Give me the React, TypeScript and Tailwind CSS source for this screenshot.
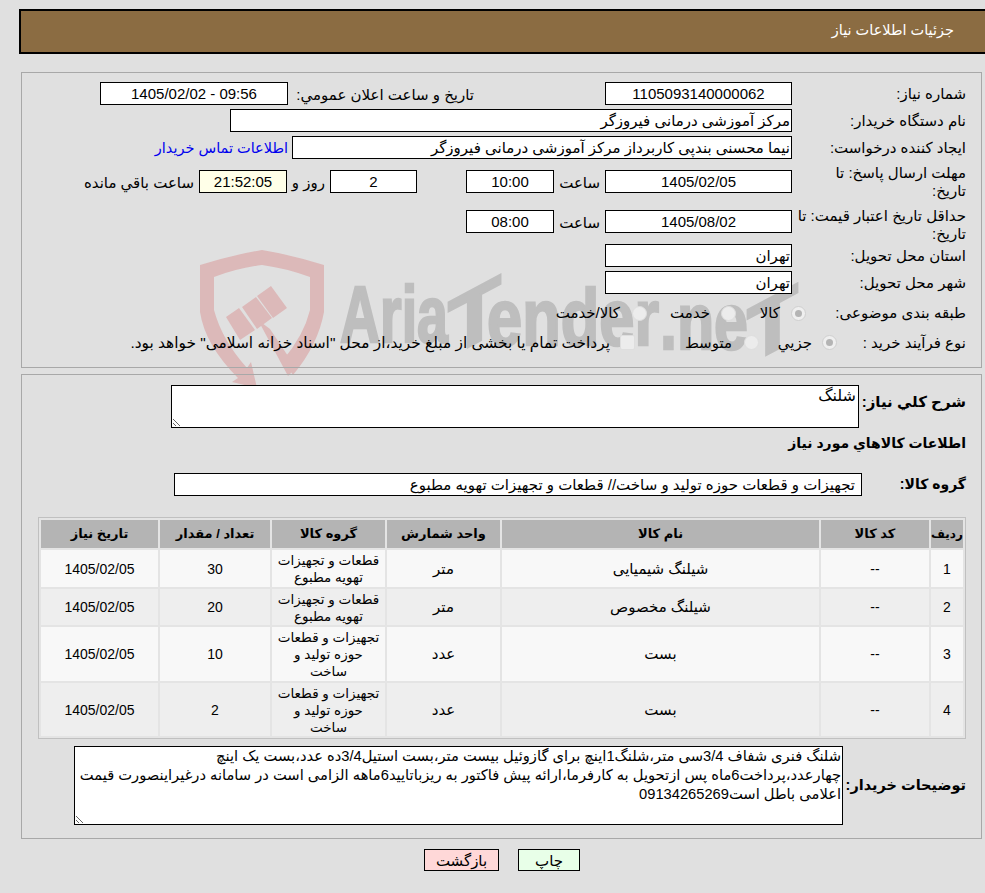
import React from "react";

// Read-only box used all over the form
const Field = ({ className, children }: { className: string; children: React.ReactNode }) => (
  <div className={`h-[23px] border border-black bg-white leading-[21px] whitespace-nowrap overflow-hidden ${className}`}>
    {children}
  </div>
);

const Label = ({ children }: { children: React.ReactNode }) => (
  <div className="w-[174px] shrink-0 leading-[18px]">{children}</div>
);

const Radio = ({ checked }: { checked?: boolean }) => (
  <span className={`flex h-[15px] w-[15px] shrink-0 items-center justify-center rounded-full border ${checked ? "border-[#cfcfcf] bg-[#efefef]" : "border-[#dedede] bg-[#ececec]"}`}>
    {checked && <span className="h-[7px] w-[7px] rounded-full bg-[#b4b4b4]" />}
  </span>
);

// Faint site watermark sitting behind the first panel
const Watermark = () => (
  <svg className="absolute left-0 top-0 [direction:ltr]" width="985" height="400" viewBox="0 0 985 400">
    <g fill="#dcb9b9">
      <path d="M200 265 Q232 255 262 250 Q292 255 324 265 L324 312 Q318 345 293 375 L283 360 Q304 335 310 310 L310 277 Q285 268 262 265 Q238 268 214 277 L214 310 Q222 340 247 368 L251 362 L257 388 L232 382 L238 378 Q205 345 200 312 Z" />
      <path d="M226 317 L239 308 L255 330 L240 340 Z" />
      <path d="M242 307 L256 297 L272 318 L257 329 Z" />
      <path d="M257 296 L271 286 L287 308 L273 318 Z" />
      <path d="M258 320 L270 329 L296 368 L288 376 Z" />
    </g>
    <g fill="#bebebe" stroke="#bebebe" strokeWidth="2.5" fontFamily="'Liberation Sans', sans-serif" fontWeight="700" fontSize="80">
      <text x="340" y="342" textLength="108" lengthAdjust="spacingAndGlyphs">Aria</text>
      <text x="448" y="344" textLength="53" lengthAdjust="spacingAndGlyphs" transform="translate(474 344) skewY(-28) translate(-474 -344)">T</text>
      <text x="487" y="345" textLength="172" lengthAdjust="spacingAndGlyphs">ender</text>
      <text x="660" y="349" textLength="88" lengthAdjust="spacingAndGlyphs">.ne</text>
      <text x="747" y="352" textLength="51" lengthAdjust="spacingAndGlyphs" transform="translate(772 352) skewY(-28) translate(-772 -352)">T</text>
    </g>
  </svg>
);

const rows = [
  { no: 1, name: "شیلنگ شیمیایی", unit: "متر", group: ["قطعات و تجهیزات", "تهویه مطبوع"], qty: 30, h: "h-[37px]" },
  { no: 2, name: "شیلنگ مخصوص", unit: "متر", group: ["قطعات و تجهیزات", "تهویه مطبوع"], qty: 20, h: "h-[36px]" },
  { no: 3, name: "بست", unit: "عدد", group: ["تجهیزات و قطعات", "حوزه تولید و", "ساخت"], qty: 10, h: "h-[54px]" },
  { no: 4, name: "بست", unit: "عدد", group: ["تجهیزات و قطعات", "حوزه تولید و", "ساخت"], qty: 2, h: "h-[53px]" },
];

const App = () => {
  return (
    <div
      dir="rtl"
      className="relative h-[893px] w-[985px] overflow-hidden bg-[#e0e0e0] text-[15px] text-black font-['Liberation_Sans','DejaVu_Sans',sans-serif]"
    >
      <Watermark />

      <div className="relative pt-[9px]">
        {/* Title bar */}
        <div className="ml-[19px] -mr-[10px] flex h-[45px] items-center border-2 border-black bg-[#8b6c42] pr-[39px] pb-[1px] text-[14.5px] text-white">
          جزئیات اطلاعات نیاز
        </div>

        {/* Need details */}
        <div className="ml-[21px] mr-[3px] mt-[18px] h-[296px] border border-[#a8a8a8] pr-[15px] pt-[9px]">
          <div className="flex h-[27px]">
            <Label><div className="pt-[3px]">شماره نیاز:</div></Label>
            <Field className="w-[187px] text-center">1105093140000062</Field>
            <div className="w-[131px] shrink-0" />
            <div className="w-[186px] shrink-0 pt-[2px] whitespace-nowrap">تاریخ و ساعت اعلان عمومي:</div>
            <Field className="w-[188px] text-center"><span dir="ltr">1405/02/02 - 09:56</span></Field>
          </div>
          <div className="flex h-[27px]">
            <Label><div className="pt-[3px]">نام دستگاه خریدار:</div></Label>
            <Field className="w-[562px] pr-[1px]">مرکز آموزشی درمانی فیروزگر</Field>
          </div>
          <div className="flex h-[30px]">
            <Label><div className="pt-[3px]">ایجاد کننده درخواست:</div></Label>
            <Field className="w-[500px] pr-[1px]">نیما محسنی بندپی کاربرداز مرکز آموزشی درمانی فیروزگر</Field>
            <div className="mr-[4px] whitespace-nowrap pt-[2px] text-[14.5px] text-[#0000ee]">اطلاعات تماس خریدار</div>
          </div>
          <div className="flex h-[42px]">
            <Label><div className="-mt-[2px]">مهلت ارسال پاسخ: تا<br />تاریخ:</div></Label>
            <div className="flex pt-[4px]">
              <Field className="w-[187px] text-center">1405/02/05</Field>
              <div className="w-[51px] shrink-0 pr-[5px] pt-[2px]">ساعت</div>
              <Field className="w-[88px] text-center">10:00</Field>
              <div className="w-[49px] shrink-0" />
              <Field className="w-[87px] text-center">2</Field>
              <div className="w-[43px] shrink-0 pr-[5px] pt-[2px] whitespace-nowrap">روز و</div>
              <Field className="w-[88px] !bg-[#ffffe8] text-center">21:52:05</Field>
              <div className="mr-[5px] whitespace-nowrap pt-[2px]">ساعت باقي مانده</div>
            </div>
          </div>
          <div className="flex h-[36px]">
            <Label><div className="-mt-[1px]">حداقل تاریخ اعتبار قیمت: تا تاریخ:</div></Label>
            <div className="flex pt-[2px]">
              <Field className="w-[187px] text-center">1405/08/02</Field>
              <div className="w-[51px] shrink-0 pr-[5px] pt-[2px]">ساعت</div>
              <Field className="w-[88px] text-center">08:00</Field>
            </div>
          </div>
          <div className="flex h-[27px]">
            <Label><div className="pt-[3px]">استان محل تحویل:</div></Label>
            <Field className="w-[187px] pr-[1px]">تهران</Field>
          </div>
          <div className="flex h-[27px]">
            <Label><div className="pt-[3px]">شهر محل تحویل:</div></Label>
            <Field className="w-[187px] pr-[1px]">تهران</Field>
          </div>
          <div className="flex h-[30px] items-center">
            <Label>طبقه بندی موضوعی:</Label>
            <div className="-mr-[14px] flex items-center">
              <Radio checked />
              <span className="mr-[11px] w-[44px]">کالا</span>
              <Radio />
              <span className="mr-[11px] w-[63px]">خدمت</span>
              <Radio />
              <span className="mr-[12px] whitespace-nowrap">کالا/خدمت</span>
            </div>
          </div>
          <div className="flex h-[30px] items-center">
            <Label>نوع فرآیند خرید :</Label>
            <div className="-mr-[45px] flex items-center">
              <Radio checked />
              <span className="mr-[10px] w-[53px]">جزیي</span>
              <Radio />
              <span className="mr-[12px] w-[97px]">متوسط</span>
              <span className="h-[15px] w-[15px] shrink-0 rounded-[2px] border border-[#dedede] bg-[#ececec]" />
              <span className="mr-[10px] whitespace-nowrap text-[15.4px]">پرداخت تمام یا بخشی از مبلغ خرید،از محل "اسناد خزانه اسلامی" خواهد بود.</span>
            </div>
          </div>
        </div>

        {/* Items */}
        <div className="ml-[21px] mr-[3px] mt-[6px] h-[465px] border border-[#a8a8a8] pt-[10px]">
          <div className="flex h-[48px] pr-[15px]">
            <div className="w-[107px] shrink-0 pt-[6px] font-bold">شرح کلي نیاز:</div>
            <textarea
              readOnly
              defaultValue="شلنگ"
              className="h-[43px] w-[688px] border border-black bg-white pr-[2px] text-[16px] leading-[19px] outline-none"
            />
          </div>
          <div className="pr-[15px] text-[14px] font-bold leading-[20px]">اطلاعات کالاهاي مورد نیاز</div>
          <div className="mt-[20px] flex h-[33px] pr-[15px]">
            <div className="w-[104px] shrink-0 text-[14px] font-bold leading-[22px]">گروه کالا:</div>
            <Field className="w-[688px] pr-[6px]">تجهیزات و قطعات حوزه تولید و ساخت//  قطعات و تجهیزات تهویه مطبوع</Field>
          </div>

          <div className="mr-[15px] mt-[11px] w-[928px] border border-[#c0c0c0] bg-[#e4e4e4]">
            <table className="w-full table-fixed border-separate border-spacing-[2px] text-center text-[14px]">
              <colgroup>
                <col className="w-[32px]" />
                <col className="w-[108px]" />
                <col className="w-[317px]" />
                <col className="w-[113px]" />
                <col className="w-[113px]" />
                <col className="w-[110px]" />
                <col />
              </colgroup>
              <thead>
                <tr className="h-[28px] bg-[#b4b4b4] text-[13px] font-bold">
                  <th className="whitespace-nowrap p-0 text-[12px]">ردیف</th>
                  <th className="p-0">کد کالا</th>
                  <th className="p-0">نام کالا</th>
                  <th className="p-0">واحد شمارش</th>
                  <th className="p-0">گروه کالا</th>
                  <th className="p-0">تعداد / مقدار</th>
                  <th className="p-0">تاریخ نیاز</th>
                </tr>
              </thead>
              <tbody>
                {rows.map((row, i) => (
                  <tr key={row.no} className={`${row.h} ${i % 2 === 0 ? "bg-[#f8f8f8]" : "bg-[#eeeeee]"}`}>
                    <td className="p-0 pt-[1px]">{row.no}</td>
                    <td className="p-0 pt-[1px]">--</td>
                    <td className="p-0 pt-[1px] text-[15px]">{row.name}</td>
                    <td className="p-0 pt-[1px] text-[15px]">{row.unit}</td>
                    <td className="p-0 pt-[1px] text-[13.5px] leading-[17px]">
                      {row.group.map((line) => (
                        <div key={line} className="whitespace-nowrap">{line}</div>
                      ))}
                    </td>
                    <td className="p-0 pt-[1px]">{row.qty}</td>
                    <td className="p-0 pt-[1px]">1405/02/05</td>
                  </tr>
                ))}
              </tbody>
            </table>
          </div>

          <div className="mt-[7px] flex pr-[15px]">
            <div className="w-[123px] shrink-0 self-center whitespace-nowrap text-[14.5px] font-bold">توضیحات خریدار:</div>
            <textarea
              readOnly
              defaultValue={"شلنگ فنری شفاف 3/4سی متر،شلنگ1اینچ برای گازوئیل بیست متر،بست استیل3/4ده عدد،بست یک اینچ\nچهارعدد،پرداخت6ماه پس ازتحویل به کارفرما،ارائه پیش فاکتور به ریزباتایید6ماهه الزامی است در سامانه درغیراینصورت قیمت\nاعلامی باطل است09134265269"}
              className="h-[79px] w-[769px] border border-black bg-white pr-[1px] text-[14.7px] leading-[19px] outline-none"
            />
          </div>
        </div>

        {/* Actions */}
        <div className="mr-[405px] mt-[10px] flex gap-[19px]">
          <button className="h-[22px] w-[62px] border border-black bg-[#e8ffe8] text-[15px]">چاپ</button>
          <button className="h-[22px] w-[75px] border border-black bg-[#ffd8d8] text-[15px]">بازگشت</button>
        </div>
      </div>
    </div>
  );
};

export default App;
